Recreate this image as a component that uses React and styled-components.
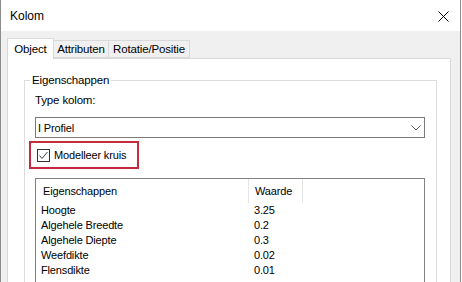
import React from 'react';
import styled, { createGlobalStyle } from 'styled-components';

const GlobalStyle = createGlobalStyle`
  html, body {
    margin: 0;
    padding: 0;
    background: #ffffff;
  }
  body {
    font-family: "Liberation Sans", Arial, sans-serif;
    font-size: 11px;
    letter-spacing: -0.15px;
    color: #000;
  }
`;

const Window = styled.div`
  display: flex;
  flex-direction: column;
  width: 461px;
  height: 282px;
  border-left: 1px solid #8c8c8c;
  border-right: 1px solid #8c8c8c;
  box-sizing: border-box;
  overflow: hidden;
`;

const TitleBar = styled.div`
  display: flex;
  align-items: center;
  justify-content: space-between;
  height: 31px;
  flex-shrink: 0;
  padding: 0 11px 0 9px;
  background: #ffffff;
  font-size: 12px;
  letter-spacing: 0;
`;

const CloseButton = styled.button`
  display: flex;
  align-items: center;
  justify-content: center;
  width: 12px;
  height: 12px;
  padding: 0;
  margin-top: 1px;
  border: none;
  background: none;
`;

const Body = styled.div`
  display: flex;
  flex-direction: column;
  flex: 1;
  padding: 7px 9px 0 6px;
  background: #f0f0f0;
`;

const TabRow = styled.div`
  display: flex;
  align-items: flex-end;
  height: 21px;
  margin-bottom: -1px;
  position: relative;
  z-index: 1;
`;

const Tab = styled.div`
  display: flex;
  align-items: center;
  justify-content: center;
  box-sizing: border-box;
  height: ${props => props.active ? '21px' : '18px'};
  padding: ${props => props.active ? '0 0 1px' : '0'};
  width: ${props => props.width}px;
  margin-bottom: ${props => props.active ? '0' : '1px'};
  background: ${props => props.active ? '#ffffff' : '#f0f0f0'};
  border: 1px solid #d9d9d9;
  border-bottom: ${props => props.active ? 'none' : '1px solid #d9d9d9'};
  border-left: ${props => props.first ? '1px solid #d9d9d9' : 'none'};
  font-size: 11.5px;
`;

const Panel = styled.div`
  flex: 1;
  display: flex;
  flex-direction: column;
  background: #ffffff;
  border: 1px solid #d9d9d9;
  border-bottom: none;
  padding: 15px 13px 0 16px;
`;

const GroupBox = styled.fieldset`
  flex: 1;
  margin: 0;
  padding: 7px 11px 0 10px;
  border: 1px solid #dcdcdc;
  border-bottom: none;
  display: flex;
  flex-direction: column;
  min-width: 0;
`;

const Legend = styled.legend`
  padding: 0 2px;
  margin-left: -5px;
  font-size: 11.5px;
`;

const FieldLabel = styled.div`
  height: 15px;
  line-height: 15px;
  margin-bottom: 9px;
  font-size: 11.5px;
`;

const Select = styled.div`
  display: flex;
  align-items: center;
  justify-content: space-between;
  height: 21px;
  box-sizing: border-box;
  border: 1px solid #7a7a7a;
  padding: 0 3px 0 2px;
`;

const Highlight = styled.div`
  display: flex;
  align-items: center;
  width: 110px;
  height: 28px;
  box-sizing: border-box;
  margin: 3px 0 0 -6px;
  padding-left: 6px;
  border: 2px solid #c42b3c;
`;

const CheckBox = styled.span`
  display: flex;
  align-items: center;
  justify-content: center;
  width: 13px;
  height: 13px;
  box-sizing: border-box;
  border: 1px solid #333333;
  margin-right: 4px;
  background: #ffffff;
`;

const ListView = styled.div`
  flex: 1;
  margin-top: 9px;
  border: 1px solid #828282;
  border-bottom: none;
`;

const HeaderRow = styled.div`
  display: flex;
  height: 24px;
`;

const HeaderCell = styled.div`
  display: flex;
  align-items: center;
  width: ${props => props.width}px;
  padding-left: ${props => props.pad}px;
  box-sizing: border-box;
  border-right: 1px solid #e5e5e5;
`;

const Row = styled.div`
  display: flex;
  height: 15px;
  line-height: 15px;
`;

const Cell = styled.div`
  width: ${props => props.width}px;
  padding-left: ${props => props.pad}px;
  box-sizing: border-box;
  white-space: nowrap;
`;

const rows = [
  ['Hoogte', '3.25'],
  ['Algehele Breedte', '0.2'],
  ['Algehele Diepte', '0.3'],
  ['Weefdikte', '0.02'],
  ['Flensdikte', '0.01']
];

const App = () => (
  <>
    <GlobalStyle />
    <Window>
      <TitleBar>
        <span>Kolom</span>
        <CloseButton>
          <svg width="11" height="11" viewBox="0 0 11 11">
            <path d="M0.5 0.5 L10.5 10.5 M10.5 0.5 L0.5 10.5" stroke="#000" strokeWidth="1" fill="none" />
          </svg>
        </CloseButton>
      </TitleBar>
      <Body>
        <TabRow>
          <Tab active first width={47}>Object</Tab>
          <Tab width={55}>Attributen</Tab>
          <Tab width={81}>Rotatie/Positie</Tab>
        </TabRow>
        <Panel>
          <GroupBox>
            <Legend>Eigenschappen</Legend>
            <FieldLabel>Type kolom:</FieldLabel>
            <Select>
              <span>I Profiel</span>
              <svg width="10" height="6" viewBox="0 0 10 6">
                <path d="M0.5 0.5 L5 5 L9.5 0.5" stroke="#555" strokeWidth="1" fill="none" />
              </svg>
            </Select>
            <Highlight>
              <CheckBox>
                <svg width="11" height="11" viewBox="0 0 11 11">
                  <path d="M1.5 5.5 L4 8.5 L9.5 2" stroke="#444" strokeWidth="1" fill="none" />
                </svg>
              </CheckBox>
              <span>Modelleer kruis</span>
            </Highlight>
            <ListView>
              <HeaderRow>
                <HeaderCell width={213} pad={7}>Eigenschappen</HeaderCell>
                <HeaderCell width={54} pad={6}>Waarde</HeaderCell>
              </HeaderRow>
              {rows.map(([name, value]) => (
                <Row key={name}>
                  <Cell width={213} pad={5}>{name}</Cell>
                  <Cell width={60} pad={5}>{value}</Cell>
                </Row>
              ))}
            </ListView>
          </GroupBox>
        </Panel>
      </Body>
    </Window>
  </>
);

export default App;
